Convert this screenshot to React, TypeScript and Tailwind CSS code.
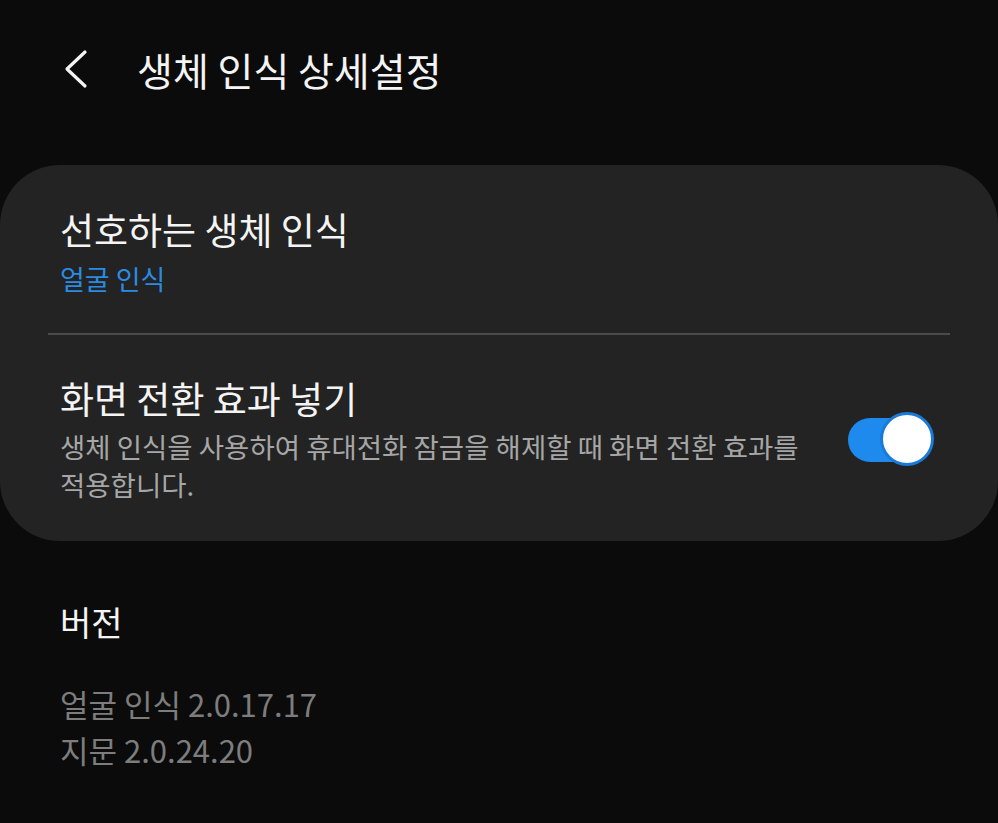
import React, { useState } from 'react';

const font = { fontFamily: '"Noto Sans CJK KR", "Noto Sans", sans-serif' };

const Toggle: React.FC<{ on: boolean; onClick: () => void }> = ({ on, onClick }) => (
  <button onClick={onClick} className="relative w-[88px] h-[56px] shrink-0">
    <span
      className={`absolute left-[2px] top-[6px] h-[44px] w-[70px] rounded-full ${on ? 'bg-[#1e8aee]' : 'bg-[#555]'}`}
    />
    <span
      className={`absolute top-0 h-[54px] w-[54px] rounded-full bg-white border-[3px] ${
        on ? 'left-[34px] border-[#1a7ad8]' : 'left-0 border-[#777]'
      }`}
    />
  </button>
);

const App: React.FC = () => {
  const [effect, setEffect] = useState(true);

  return (
    <div className="min-h-[823px] bg-[#0b0b0b] text-[#f4f4f4]" style={font}>
      {/* Header */}
      <div className="flex items-center h-[140px] pb-[2px]">
        <button className="ml-[63px] w-[28px] flex items-center">
          <svg width="26" height="40" viewBox="0 0 26 40" fill="none">
            <path d="M22 3 L4 20 L22 37" stroke="#f4f4f4" strokeWidth="3.2" strokeLinecap="round" strokeLinejoin="round" />
          </svg>
        </button>
        <h1 className="ml-[46px] text-[39px] leading-none">생체 인식 상세설정</h1>
      </div>

      {/* Card */}
      <div className="mt-[25px] bg-[#222322] rounded-[60px] pt-[42px] pb-[38px]">
        <div className="px-[60px] pb-[36px]">
          <div className="text-[37px] leading-[45px]">선호하는 생체 인식</div>
          <div className="mt-[9px] text-[27px] leading-[36px] text-[#2b8be2]">얼굴 인식</div>
        </div>
        <div className="mx-[48px] h-[2px] bg-[#4a4b4a]" />
        <div className="flex items-center pl-[60px] pr-[64px] pt-[41px]">
          <div className="flex-1">
            <div className="text-[37px] leading-[45px]">화면 전환 효과 넣기</div>
            <div className="mt-[6px] text-[27.5px] leading-[38px] text-[#a6a6a6]">
              생체 인식을 사용하여 휴대전화 잠금을 해제할 때 화면 전환 효과를
              <br />
              적용합니다.
            </div>
          </div>
          <Toggle on={effect} onClick={() => setEffect((p) => !p)} />
        </div>
      </div>

      {/* Version */}
      <div className="px-[60px] pt-[60px]">
        <div className="text-[34px] leading-[42px]">버전</div>
        <div className="mt-[38px] text-[31px] leading-[46px] text-[#7d7d7d]">
          <div>얼굴 인식 2.0.17.17</div>
          <div>지문 2.0.24.20</div>
        </div>
      </div>
    </div>
  );
};

export default App;
